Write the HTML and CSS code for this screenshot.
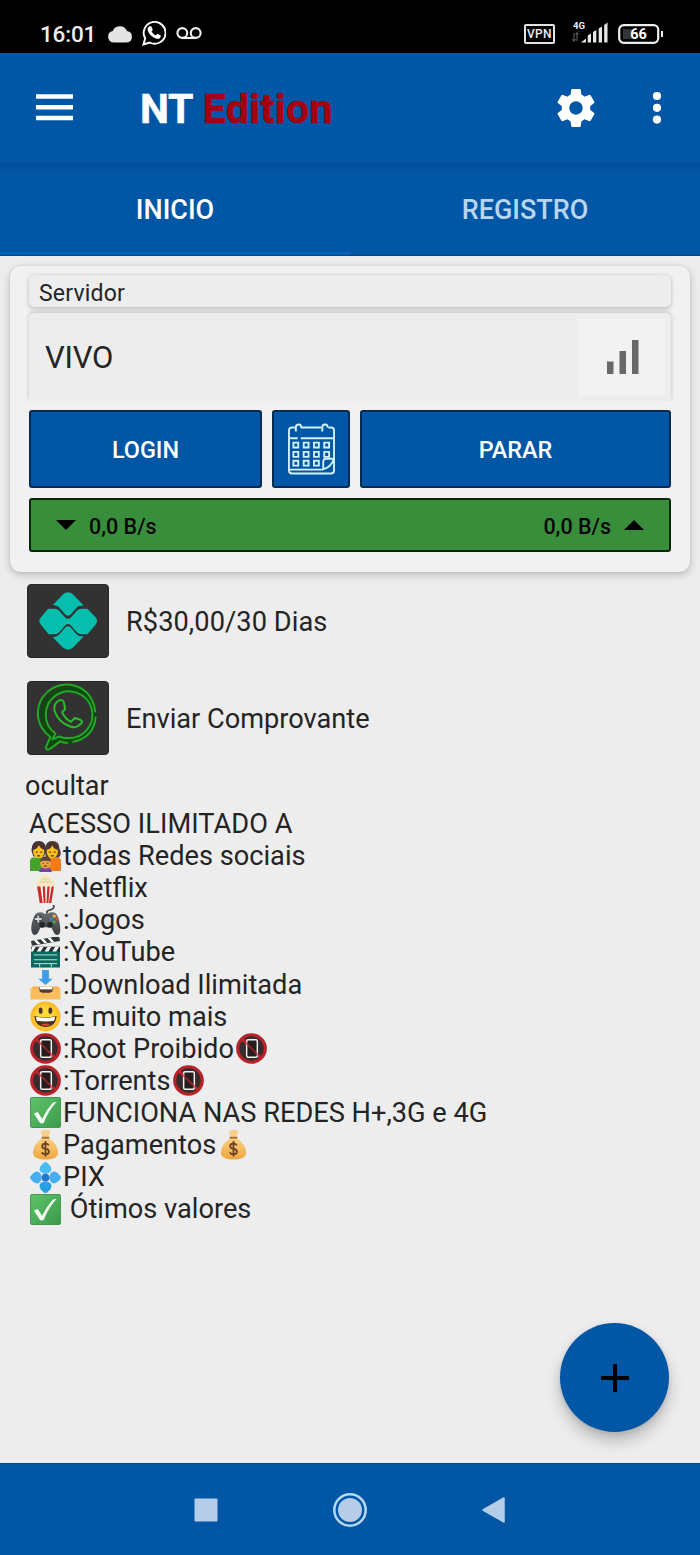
FILE: index.html
```html
<!DOCTYPE html>
<html lang="pt-BR">
<head>
<meta charset="utf-8">
<title>NT Edition</title>
<link rel="stylesheet" href="styles.css">
</head>
<body>
<svg class="defs" width="0" height="0" aria-hidden="true">
  <defs>
    <linearGradient id="g-green" x1="0" y1="0" x2="1" y2="1"><stop offset="0" stop-color="#5fc46a"/><stop offset="1" stop-color="#3a9a4a"/></linearGradient>
    <linearGradient id="g-bag" x1="0" y1="0" x2="0" y2="1"><stop offset="0" stop-color="#fbd283"/><stop offset="1" stop-color="#eda63f"/></linearGradient>
    <linearGradient id="g-pad" x1="0" y1="0" x2="0" y2="1"><stop offset="0" stop-color="#6a6d70"/><stop offset="1" stop-color="#3c3f42"/></linearGradient>
    <radialGradient id="g-face"><stop offset=".5" stop-color="#ffd83a"/><stop offset="1" stop-color="#f9b823"/></radialGradient>
  </defs>
  <symbol id="e-family" viewBox="0 0 32 32">
    <path d="M0 31V21q0-4 4-4h8q4 0 4 4v10z" fill="#43a32b"/><path d="M16 31V21q0-4 4-4h8q4 0 4 4v10z" fill="#f67b19"/>
    <path d="M1.500 10Q1.500 0 9 0t7.500 9l-2 7H3.500z" fill="#3f3134"/><path d="M15.500 9q0-9 7.500-9t7.500 8q3 6-1 9H17q-2-3-1.500-8z" fill="#553b3b"/>
    <ellipse cx="9" cy="11" rx="5.800" ry="6.800" fill="#fcc21b"/><ellipse cx="23" cy="11" rx="5.800" ry="6.800" fill="#fcc21b"/>
    <path d="M3 9Q8 8 9 4q2 4 6 5Q14 1 9 1T3 9zM17 9q5-1 6-5 1 4 6 5-1-8-6-8t-6 8z" fill="#4a3233"/>
    <path d="M6 11.500h2M10.500 11.500h2M19.500 11.500h2M24.500 11.500h2M7.500 15q1.500 1 3 0M21.500 15q1.500 1 3 0" stroke="#633c28" stroke-width="1.300"/>
    <path d="M9.500 32q0-5 6.500-5t6.500 5z" fill="#7742a0"/><ellipse cx="16" cy="23" rx="5.500" ry="5.500" fill="#eca344"/><path d="M10.500 22q0-6 5.500-6t5.500 6l-2-1.500h-7z" fill="#58403c"/>
    <path d="M13 23h1.500M17.500 23H19M14.500 26h3" stroke="#633c28" stroke-width="1.200"/>
  </symbol>
  <symbol id="e-popcorn" viewBox="0 0 32 32">
    <path d="M7 12h18l-3 19H10z" fill="#fff5ef"/><path d="M7 12h3.500l2.500 19h-3zM13 12h2.500l.5 19h-2zM18 12h2.500l-1.500 19h-2zM22.500 12H25l-3 19h-2.500z" fill="#c72c2c"/>
    <path d="M7 14Q5 9 9 7q0-4 4-4 3-4 6 0 4 0 4 4 3 2 2 7z" fill="#f8e9c4"/><path d="M10 10q2-3 4 0 2-3 4 0 2-3 5 1M12 7q2-3 4 0 2-3 4 0" fill="none" stroke="#dcc58d"/>
  </symbol>
  <symbol id="e-game" viewBox="0 0 32 32">
    <path d="M18 9q-2-3 3-4 5-1 3-6" fill="none" stroke="#45494c" stroke-width="1.900"/>
    <path d="M6 9q5-3 9 0h3q5-3 9 0c3 4 5 14 4 19-1 4-5 4-7-1l-2-4H11l-2 4c-2 5-6 5-7 1C0 23 3 13 6 9z" fill="url(#g-pad)"/>
    <circle cx="8.500" cy="14.500" r="4.500" fill="#45494c"/><path d="M8.500 11v7M5 14.500h7" stroke="#d2d6d9" stroke-width="2"/>
    <circle cx="12.500" cy="20.500" r="3" fill="#24282b"/><circle cx="20.500" cy="20.500" r="3" fill="#24282b"/>
    <circle cx="25" cy="11.500" r="1.700" fill="#f4b12b"/><circle cx="22" cy="14.500" r="1.700" fill="#2e8de0"/><circle cx="28" cy="14.500" r="1.700" fill="#df4a39"/><circle cx="25" cy="17.500" r="1.700" fill="#4cab44"/>
  </symbol>
  <symbol id="e-clap" viewBox="0 0 32 32">
    <path d="M1 12h30v19.500H1z" fill="#08695f"/><path d="M1 10h30v5H1z" fill="#263234"/><path d="M1 4L30-1l1 5-29 5z" fill="#30383a"/>
    <path d="M4 3.500l4 4.200 3-.5-4-4.200zM11 2.200l4 4.300 3-.5-4-4.300zM18 1l4 4.300 3-.5L21 .5zM2 10h4l-3 5H1zM10 10h4l-3 5H7zM18 10h4l-3 5h-4zM26 10h4l-3 5h-4z" fill="#fff"/>
    <path d="M4 18.500h24M4 23.500h24M4 27.500h24M10 27.500v3.500M22 27.500v3.500" stroke="#bfe8e1" stroke-width="1"/>
  </symbol>
  <symbol id="e-inbox" viewBox="0 0 32 32">
    <path d="M3 18h26l2 3H1z" fill="#f4ad45"/><path d="M.5 20h31v11.500H.5z" fill="#fbbd5a"/><path d="M9 19h15l-1 4q-1 1.500-3 1.500h-7q-2 0-3-1.500z" fill="#563c2d"/><path d="M10 18.500h13v2.500H10z" fill="#fff"/>
    <path d="M12.500 1h7v9h4L16 16.500 8.500 10h4z" fill="#3d9eea"/>
  </symbol>
  <symbol id="e-grin" viewBox="0 0 32 32">
    <circle cx="16" cy="16" r="15.500" fill="url(#g-face)"/><ellipse cx="11" cy="10" rx="2" ry="3.200" fill="#4c3427"/><ellipse cx="21" cy="10" rx="2" ry="3.200" fill="#4c3427"/>
    <path d="M4.500 15.500q11.500 2.500 23 0-1 11.500-11.500 11.500T4.500 15.500z" fill="#4a3025"/><path d="M6 16.300q10 2 20 0l-1 4.200q-9 1.500-18 0z" fill="#fff"/><path d="M11 24.500q5-2.500 10 0-5 3-10 0z" fill="#c9453f"/>
  </symbol>
  <symbol id="e-nophone" viewBox="0 0 32 32">
    <circle cx="16" cy="16" r="14.200" fill="#352c2d" stroke="#b8222b" stroke-width="3.300"/><path d="M5.500 5.500l21 21" stroke="#c0262e" stroke-width="3"/>
    <path d="M12.500 7h8q1.500 0 1.500 1.500v15q0 1.500-1.500 1.500h-8q-1.500 0-1.500-1.500v-15Q11 7 12.500 7z" fill="#241d1e" stroke="#f5f1f1" stroke-width="1.500"/><path d="M6 6l20 20" stroke="#b7252d" stroke-width="2" opacity=".75"/>
  </symbol>
  <symbol id="e-check" viewBox="0 0 32 32">
    <rect x=".5" y=".5" width="31" height="31" rx="1.500" fill="url(#g-green)" stroke="#3c9850"/><path d="M4 17l4-1.500 4.500 7Q17 13 23.500 6l4-1Q19 14 14 27h-3.500z" fill="#f4fff4"/>
  </symbol>
  <symbol id="e-bag" viewBox="0 0 32 32">
    <path d="M11 1q2 2 4-.5 3 1 6 .5l-2 8h-6z" fill="#f6cf8b"/><path d="M13 9h6q10 7 10 15 0 7.500-13 7.500T3 24q0-8 10-15z" fill="url(#g-bag)"/><path d="M12 9h8" stroke="#aa7134" stroke-width="2"/>
    <path d="M19.500 17q-1-2-3.500-2-3.500 0-3.500 2.600T16 20.500t3.500 3-3.500 2.700q-3 0-3.700-2.200M16 12.500v16" fill="none" stroke="#693f21" stroke-width="1.800"/>
  </symbol>
  <symbol id="e-diamond" viewBox="0 0 32 32">
    <path d="M16 0q1.500 0 5 4 2.500 4-.5 6.500l-3 1.500h-3l-3-1.500Q8.500 8 11 4q3.500-4 5-4z" fill="#4bbbf3"/><path d="M16 32q1.500 0 5-4 2.500-4-.5-6.500l-3-1.500h-3l-3 1.500Q8.500 24 11 28q3.500 4 5 4z" fill="#279fe4"/>
    <path d="M0 16q0-1.500 4-5 4-2.500 6.500.5l1.500 3v3l-1.500 3Q8 23.500 4 21q-4-3.500-4-5zM32 16q0-1.500-4-5-4-2.500-6.500.5l-1.500 3v3l1.500 3Q24 23.500 28 21q4-3.500 4-5z" fill="#45aef0"/><circle cx="16" cy="16" r="4" fill="#2375ce"/>
  </symbol>
</svg>

<div class="screen">
  <div class="status">
    <span class="clock">16:01</span>
    <svg class="cloud" viewBox="0 0 26 18"><path d="M6.300 17.500a5.900 5.900 0 01-.6-11.600A7.800 7.800 0 0120 6a5.800 5.800 0 01-.3 11.500z" fill="#e4e4e4"/></svg>
    <svg class="wa" viewBox="0 0 24 26"><path d="M1.500 24.500l1.700-6.200A10.900 10.900 0 117.600 22.500z" fill="none" stroke="#fff" stroke-width="1.900"/><path d="M7.500 6.200h1.800l1.500 3.500-1.200 1.700c1.200 2 2.400 3.100 4.300 4l1.500-1.700 3.400 1.700c.1 3-2.500 3.900-5 3-4.600-1.500-7.600-5-8.200-8.800 0-1.500.7-2.800 1.900-3.400z" fill="#fff"/></svg>
    <svg class="voice" viewBox="0 0 26 13"><g fill="none" stroke="#eee" stroke-width="2.100"><circle cx="6.300" cy="6" r="4.900"/><circle cx="19.700" cy="6" r="4.900"/><path d="M6.300 11h13.400"/></g></svg>
    <span class="vpn">VPN</span>
    <svg class="cell" viewBox="0 0 38 23"><path d="M3 12v8M1.500 18L3 20.500 4.500 18M6 20v-8M4.500 14L6 11.500 7.500 14" stroke="#666" fill="none"/><path d="M10 21.500l5-4v4zM16.700 21.500v-7l3.300-2v9zM22 21.500V11l3.300-2v12.500zM27.700 21.500V7.500l3.300-2v16zM33.200 21.500V4l3.300-2.500v20z" fill="#e6e6e6"/><text x="2" y="8" class="gen">4G</text></svg>
    <svg class="battery" viewBox="0 0 46 20"><rect x="1.200" y="1.200" width="39" height="17.600" rx="4.500" fill="none" stroke="#eee" stroke-width="2.200"/><path d="M5 5h9v10H5z" fill="#333"/><path d="M43 7h2v6h-2z" fill="#eee"/><text x="20.500" y="15" text-anchor="middle" class="pct">66</text></svg>
  </div>

  <header class="appbar">
    <svg class="menu" viewBox="0 0 37 27"><path d="M0 2.500h37M0 13.300h37M0 24h37" stroke="#fff" stroke-width="4.400"/></svg>
    <h1 class="title">NT <span class="accent">Edition</span></h1>
    <svg class="gear" viewBox="2 2 20 20"><path fill="#fff" d="M19.430 12.980c.04-.32.07-.64.07-.98s-.03-.66-.07-.98l2.110-1.650c.19-.15.24-.42.12-.64l-2-3.460c-.12-.22-.39-.3-.61-.22l-2.490 1c-.52-.4-1.080-.73-1.690-.98l-.38-2.650C14.460 2.180 14.250 2 14 2h-4c-.25 0-.46.180-.49.420l-.38 2.650c-.61.250-1.170.590-1.690.980l-2.490-1c-.23-.09-.49 0-.61.220l-2 3.460c-.13.220-.07.490.12.640l2.110 1.650c-.04.320-.07.650-.07.980s.03.660.07.980l-2.110 1.650c-.19.150-.24.420-.12.640l2 3.460c.12.220.39.300.61.220l2.490-1c.52.400 1.080.730 1.690.980l.38 2.650c.03.240.24.420.49.420h4c.25 0 .46-.18.490-.42l.38-2.650c.61-.25 1.170-.59 1.690-.98l2.490 1c.23.090.49 0 .61-.22l2-3.460c.12-.22.07-.49-.12-.64l-2.110-1.650zM12 15.500c-1.930 0-3.500-1.570-3.500-3.500s1.570-3.500 3.500-3.500 3.500 1.570 3.500 3.500-1.570 3.500-3.500 3.500z"/></svg>
    <svg class="more" viewBox="0 0 10 32"><g fill="#fff"><circle cx="5" cy="4" r="4.100"/><circle cx="5" cy="15.800" r="4.100"/><circle cx="5" cy="27.600" r="4.100"/></g></svg>
  </header>
  <nav class="tabs"><span class="tab active">INICIO</span><span class="tab">REGISTRO</span></nav>

  <main class="content">
    <section class="card">
      <div class="label"><span class="label-text">Servidor</span></div>
      <div class="server"><span class="server-name">VIVO</span><div class="signal"><svg class="bars" viewBox="0 0 32 34"><path d="M0 21.500h6.500V34H0zM12.500 11H19v23h-6.500zM25 0h6.500v34H25z" fill="#686868"/></svg></div></div>
      <div class="buttons">
        <div class="btn"><span class="btn-text">LOGIN</span></div>
        <div class="btn"><svg class="calendar" viewBox="0 0 48 52"><g fill="none" stroke="#d3f2ff" stroke-width="1.900"><path d="M7 4H4q-3 0-3 3v41q0 3 3 3h40q3 0 3-3V7q0-3-3-3h-3M13 4h21M1 15h9M13 15h34M2 47h33q9-2 12-11h-8q-3 0-3 3v7"/><path d="M8 8V4q0-3 3-3t2 3M35 8V4q0-3 3-3t2 3" stroke-width="2"/><path d="M5.500 19.500h5v5h-5zM16 19.500h5v5h-5zM26.500 19.500h5v5h-5zM37 19.500h5v5h-5zM5.500 29h5v5h-5zM16 29h5v5h-5zM26.500 29h5v5h-5zM37 29h5v5h-5zM5.500 38h5v5h-5zM16 38h5v5h-5zM26.500 38h5v5h-5z"/></g></svg></div>
        <div class="btn"><span class="btn-text">PARAR</span></div>
      </div>
      <div class="speed"><span class="rate"><svg class="tri" viewBox="0 0 20 10"><path d="M0 0h20L10 10z"/></svg><span class="rate-text">0,0 B/s</span></span><span class="rate"><span class="rate-text">0,0 B/s</span><svg class="tri" viewBox="0 0 20 10"><path d="M0 10h20L10 0z"/></svg></span></div>
    </section>

    <div class="row">
      <svg class="thumb" viewBox="0 0 82 74"><path d="M25.500 20.500L35.500 10q5.500-5 11 0l10.500 11q-5 0-7 2l-6 7q-3 3-6 0l-6-7q-2-2-6.500-2.500zM25.500 54L35.500 64q5.500 5 11 0l10.500-11q-5 0-7-2l-6-7q-3-3-6 0l-6 7q-2 2-6.500 3zM20.500 24.500h6.500q3 0 5 2l6 6.800q3 3 6 0l6-6.800q2-2 5-2h6l8.500 9q3 3.500 0 7L61 50.500h-6q-3 0-5-2l-6-7q-3-3-6 0l-6 7q-2 2-5 2h-6L13 40.500q-3-3.500 0-7z" fill="#05beae"/></svg>
      <span class="row-text price">R$30,00/30 Dias</span>
    </div>
    <div class="row">
      <svg class="thumb" viewBox="0 0 82 74"><g fill="none" stroke-linejoin="round"><path d="M22 66.500l4-11A27 27 0 1144 60.500q-6 1-11-2z" stroke="#0b4a0b" stroke-width="4"/><path d="M41 62.500q-3 .5-8-1.500L22 69q-5 2-3-4l4-8.500A29.500 29.500 0 1169 31M69.500 35.500q-2 22-24 26" stroke="#22aa24" stroke-width="2"/><path d="M38 57.500q-3 0-6-1.500l-7 3 3-6A24 24 0 1140 57.500z" stroke="#22aa24" stroke-width="2"/><path d="M32 19q4-2 5 3l1 6-3 3q3 7 9 10l4-4 6 2q3 2 0 4-5 5-10 3Q31 42 27 29q-1-7 5-10z" stroke="#29bf29" stroke-width="2"/></g></svg>
      <span class="row-text proof">Enviar Comprovante</span>
    </div>
    <p class="hide"><span>ocultar</span></p>
    <div class="list">
      <p class="line first">ACESSO ILIMITADO A</p>
      <p class="line"><svg class="emoji"><use href="#e-family"/></svg>todas Redes sociais</p>
      <p class="line"><svg class="emoji"><use href="#e-popcorn"/></svg>:Netflix</p>
      <p class="line"><svg class="emoji"><use href="#e-game"/></svg>:Jogos</p>
      <p class="line"><svg class="emoji"><use href="#e-clap"/></svg>:YouTube</p>
      <p class="line"><svg class="emoji"><use href="#e-inbox"/></svg>:Download Ilimitada</p>
      <p class="line"><svg class="emoji"><use href="#e-grin"/></svg>:E muito mais</p>
      <p class="line"><svg class="emoji"><use href="#e-nophone"/></svg>:Root Proibido<svg class="emoji end"><use href="#e-nophone"/></svg></p>
      <p class="line"><svg class="emoji"><use href="#e-nophone"/></svg>:Torrents<svg class="emoji end"><use href="#e-nophone"/></svg></p>
      <p class="line"><svg class="emoji"><use href="#e-check"/></svg>FUNCIONA NAS REDES H+,3G e 4G</p>
      <p class="line"><svg class="emoji"><use href="#e-bag"/></svg>Pagamentos<svg class="emoji end"><use href="#e-bag"/></svg></p>
      <p class="line"><svg class="emoji"><use href="#e-diamond"/></svg>PIX</p>
      <p class="line"><svg class="emoji"><use href="#e-check"/></svg> Ótimos valores</p>
    </div>
    <div class="fab"><svg class="plus" viewBox="0 0 28 28"><path d="M0 14h28M14 0v28" stroke="#000" stroke-width="4"/></svg></div>
  </main>

  <footer class="navbar">
    <svg class="nav-icon" viewBox="0 0 36 36"><rect x="6.500" y="6.500" width="23" height="23" rx="1" fill="#b5cde8"/></svg>
    <svg class="nav-icon" viewBox="0 0 36 36"><circle cx="18" cy="18" r="15.700" fill="none" stroke="#b5daf5" stroke-width="2.500"/><circle cx="18" cy="18" r="12" fill="#b5cde8"/></svg>
    <svg class="nav-icon" viewBox="0 0 36 36"><path d="M7 18L28 6v24z" fill="#b5cde8" stroke="#b5cde8" stroke-width="1.500" stroke-linejoin="round"/></svg>
  </footer>
</div>
</body>
</html>
```

FILE: styles.css
```css
* { box-sizing: border-box; }
body { margin: 0; font-family: Roboto, "Liberation Sans", sans-serif; color: #242424; background: #eee; }
p, h1 { margin: 0; }
svg { display: block; flex: none; }
.defs { position: absolute; }
.screen { width: 700px; height: 1555px; display: flex; flex-direction: column; overflow: hidden; }

.status { height: 53px; flex: none; background: #000; display: flex; align-items: center; padding: 15px 36px 0 40px; color: #eee; }
.clock { font-size: 22.500px; font-weight: 500; width: 67px; letter-spacing: -.2px; }
.cloud { width: 26px; height: 18px; margin: -1px 9px 0 0; }
.wa { width: 24px; height: 26px; margin: -2px 10px 0 0; }
.voice { width: 26px; height: 13px; margin-top: -2px; }
.vpn { margin-left: auto; width: 31px; height: 20px; border: 2px solid #e3e3e3; border-radius: 2px; font-size: 12px; font-weight: 500; line-height: 17px; text-align: center; letter-spacing: .3px; }
.cell { width: 38px; height: 23px; margin: -3px 9px 0 16px; }
.gen { font-size: 9.500px; font-weight: 700; fill: #eee; }
.battery { width: 46px; height: 20px; }
.pct { font-size: 14.500px; font-weight: 700; fill: #fff; }

.appbar { height: 109px; flex: none; background: #0156a5; display: flex; align-items: center; padding: 0 38px 0 36px; }
.menu { width: 37px; height: 27px; }
.title { font-size: 41px; font-weight: 700; color: #fff; margin: 3px 0 0 67px; letter-spacing: -.4px; flex: 1; -webkit-text-stroke: .5px; }
.accent { color: #a30010; letter-spacing: .4px; margin-left: 1px; }
.gear { width: 38px; height: 38px; margin-right: 57px; }
.more { width: 10px; height: 32px; }
.tabs { height: 94px; flex: none; display: grid; grid-template-columns: 1fr 1fr; background: linear-gradient(#014f98, #0156a5 10px); border-bottom: 1px solid #064584; }
.tab { display: flex; align-items: center; justify-content: center; font-size: 27px; font-weight: 500; color: #b7d5f1; padding-top: 6px; border-bottom: 3px solid transparent; }
.tab.active { color: #fff; border-bottom-color: #0562b7; }

.content { height: 1207px; flex: none; background: #ededed; position: relative; padding: 10px; }
.card { height: 306px; background: #f1f1f1; border-radius: 11px; padding: 9px 19px 20px; box-shadow: 0 3px 8px rgba(0,0,0,.2), 0 0 3px rgba(0,0,0,.1); }
.label { height: 32px; border-radius: 5px; background: #ededed; padding-left: 10px; display: flex; align-items: center; box-shadow: 0 2px 5px rgba(0,0,0,.17), 0 0 3px rgba(0,0,0,.1); }
.label-text { font-size: 23px; margin-top: 4px; letter-spacing: .2px; }
.server { height: 88px; margin-top: 6px; border-radius: 5px 5px 3px 3px; background: #ededed; padding-left: 16px; display: flex; align-items: center; box-shadow: 0 -1px 4px rgba(0,0,0,.2); clip-path: inset(-5px -5px 0 -5px); }
.server-name { font-size: 31px; margin-top: 1px; letter-spacing: -.2px; }
.signal { margin: 0 6px 0 auto; width: 87px; height: 77px; background: #f2f2f2; display: flex; align-items: center; justify-content: center; padding-left: 2px; }
.bars { width: 32px; height: 34px; }
.buttons { display: grid; grid-template-columns: 233px 78px 311px; gap: 10px; height: 78px; margin-top: 9px; }
.btn { border: 2px solid #022b51; border-radius: 3px; background: #0156a5; color: #fff; display: flex; align-items: center; justify-content: center; font-size: 23.400px; font-weight: 500; }
.btn-text { margin-top: 2px; }
.calendar { width: 47px; height: 52px; }
.speed { height: 54px; margin-top: 10px; border: 2px solid #062708; border-radius: 3px; background: #398e3c; color: #080808; padding: 0 25px; display: flex; align-items: center; justify-content: space-between; }
.rate { display: flex; align-items: center; gap: 13px; font-size: 21.500px; font-weight: 500; }
.rate-text { margin-top: 3px; }
.tri { width: 20px; height: 10px; margin-top: -1px; }

.row { display: flex; align-items: center; gap: 17px; height: 74px; margin: 12px 0 0 17px; }
.row + .row { margin-top: 23px; }
.thumb { width: 82px; height: 74px; background: #323232; border: 1px solid #272727; border-radius: 4px; }
.row-text { font-size: 27.200px; margin-top: 2px; }
.price { letter-spacing: .07px; }
.hide { font-size: 27px; line-height: 32px; margin: 15px 0 0 15px; }
.list { margin: 6px 0 0 19px; font-size: 27.200px; }
.line { height: 32.100px; display: flex; align-items: center; white-space: pre; }
.first { letter-spacing: .05px; }
.emoji { width: 31px; height: 31px; margin: 0 2px 0 1px; overflow: visible; }
.emoji.end { margin-left: 2px; }
.fab { position: absolute; left: 560px; top: 1067px; width: 109px; height: 109px; border-radius: 50%; background: #0156a5; display: flex; align-items: center; justify-content: center; box-shadow: 0 9px 15px rgba(0,0,0,.22), 0 2px 5px rgba(0,0,0,.1); }
.plus { width: 28px; height: 28px; }

.navbar { height: 92px; flex: none; background: #0156a5; display: flex; align-items: center; justify-content: center; gap: 108px; padding: 0 1px 0 0; border-top: 1px solid #064988; }
.nav-icon { width: 36px; height: 36px; }
```
